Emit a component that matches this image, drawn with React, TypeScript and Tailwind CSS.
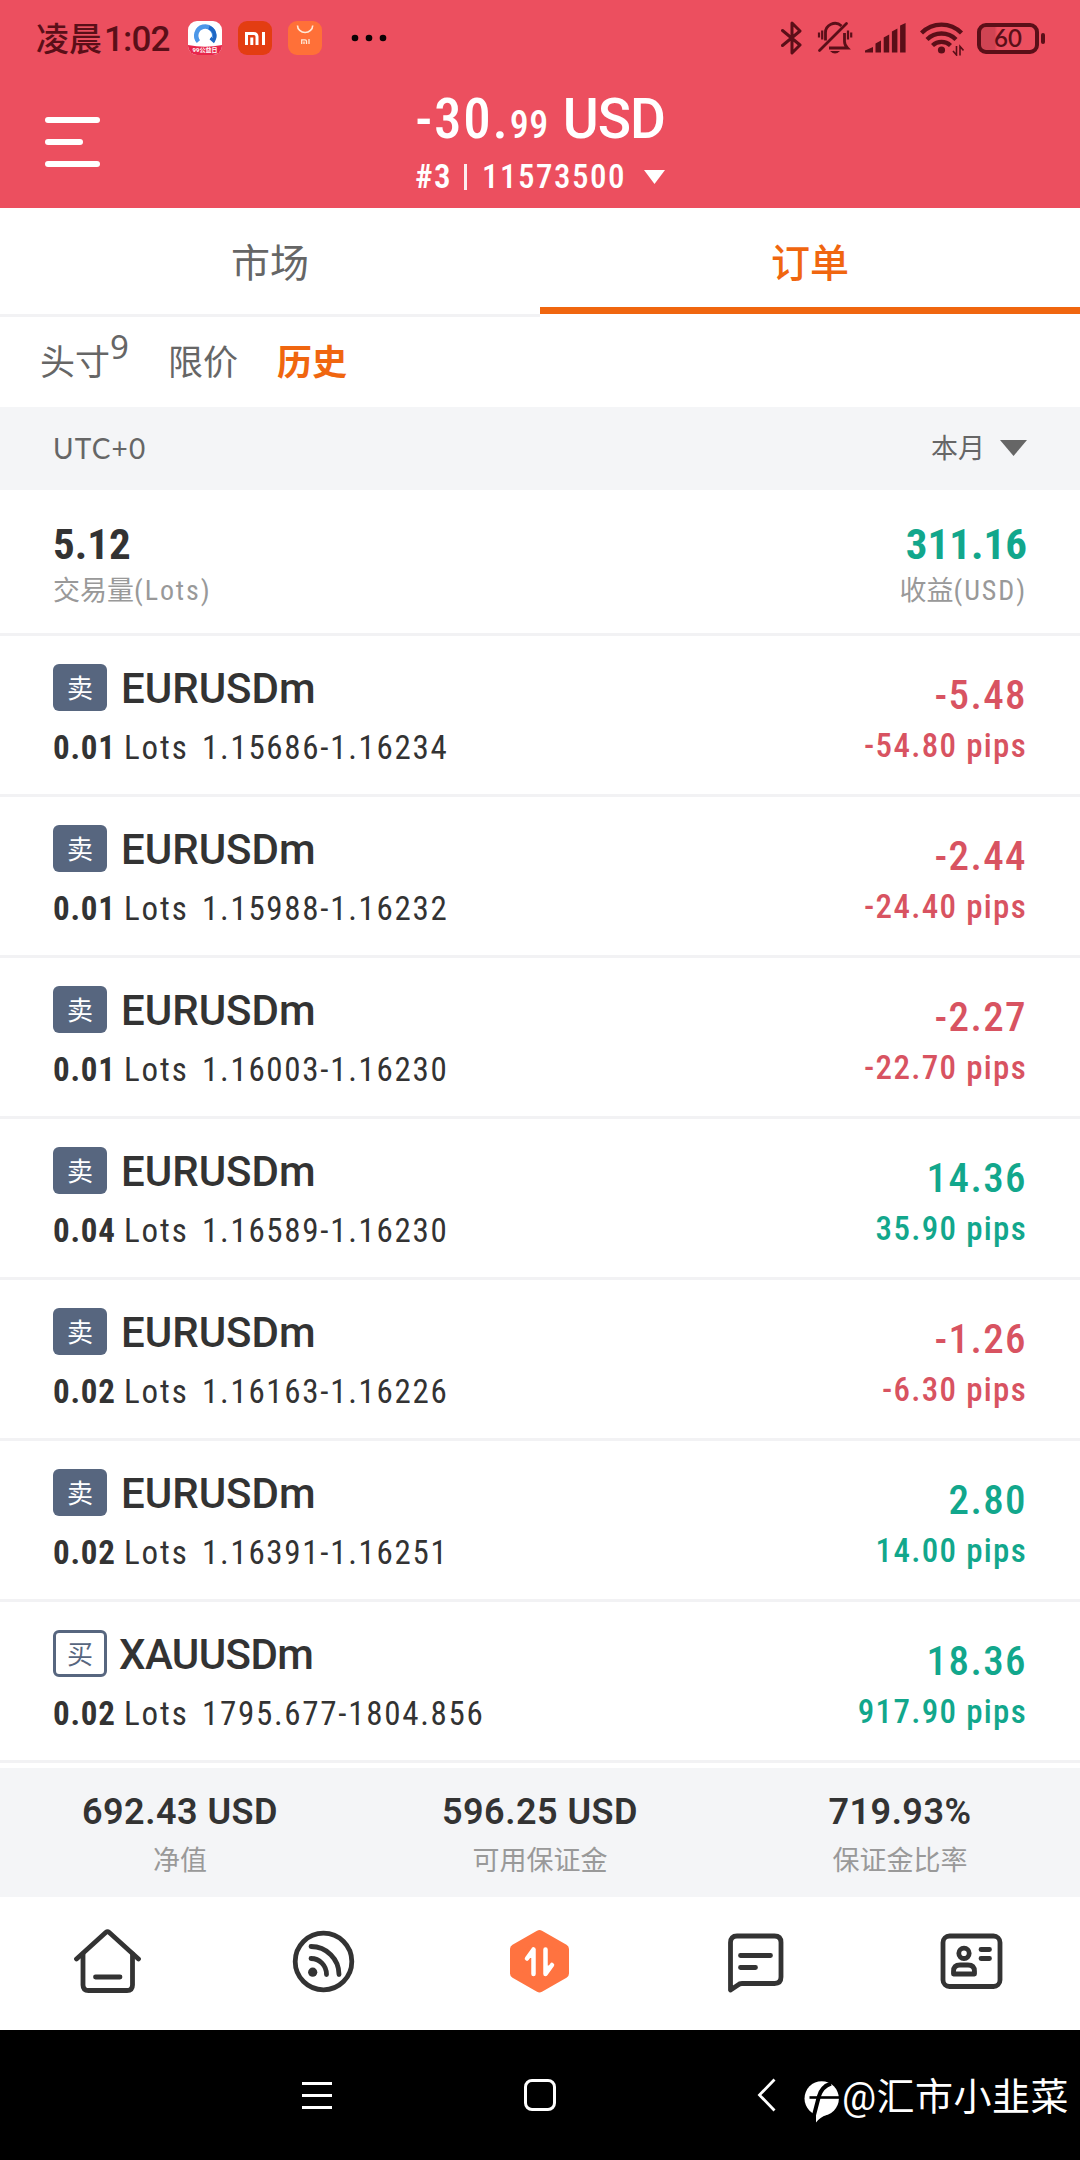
import type { ReactNode } from 'react'

interface Order {
  side: 'sell' | 'buy'
  symbol: string
  lots: string
  range: string
  profit: string
  pips: string
}

const orders: Order[] = [
  { side: 'sell', symbol: 'EURUSDm', lots: '0.01', range: '1.15686-1.16234', profit: '-5.48', pips: '-54.80' },
  { side: 'sell', symbol: 'EURUSDm', lots: '0.01', range: '1.15988-1.16232', profit: '-2.44', pips: '-24.40' },
  { side: 'sell', symbol: 'EURUSDm', lots: '0.01', range: '1.16003-1.16230', profit: '-2.27', pips: '-22.70' },
  { side: 'sell', symbol: 'EURUSDm', lots: '0.04', range: '1.16589-1.16230', profit: '14.36', pips: '35.90' },
  { side: 'sell', symbol: 'EURUSDm', lots: '0.02', range: '1.16163-1.16226', profit: '-1.26', pips: '-6.30' },
  { side: 'sell', symbol: 'EURUSDm', lots: '0.02', range: '1.16391-1.16251', profit: '2.80', pips: '14.00' },
  { side: 'buy', symbol: 'XAUUSDm', lots: '0.02', range: '1795.677-1804.856', profit: '18.36', pips: '917.90' },
]

const account = [
  { value: '692.43 USD', label: '净值' },
  { value: '596.25 USD', label: '可用保证金' },
  { value: '719.93%', label: '保证金比率' },
]

function StatusBar() {
  return (
    <div className="flex h-[76px] items-center pl-9 text-[#5a0f18]">
      <span className="w-[135px] whitespace-nowrap pt-[3px] text-[33px] font-medium leading-10">
        凌晨<span className="ml-[2px] text-[35px] tracking-[-0.8px]">1:02</span>
      </span>

      <div className="relative ml-[17px] size-[34px] overflow-hidden rounded-[9px] bg-white">
        <svg className="size-full" viewBox="0 0 34 34" fill="none">
          <path d="M10.500 20.500a9 9 0 1 1 15.500-4" stroke="#4c97e8" strokeWidth="4.5" />
          <path d="M21 6.500a9 9 0 0 1 4.500 13l-3-2.500" stroke="#1f67c4" strokeWidth="3.500" />
          <circle cx="16.500" cy="16" r="5.500" fill="#fff" />
          <path d="M0 24q17 3.500 34 0v10H0z" fill="#e8274b" />
        </svg>
        <span className="absolute inset-x-0 bottom-px text-center text-[6px] font-bold leading-[8px] text-white">
          99公益日
        </span>
      </div>
      <div className="ml-4 size-[34px] overflow-hidden rounded-[9px] bg-[#e33d12]">
        <svg className="size-full" viewBox="0 0 34 34" fill="none" stroke="#fff" strokeWidth="3">
          <path d="M8.5 24V12.5H16a3 3 0 0 1 3 3V24M13.8 16.5V24M25.5 11V24" />
        </svg>
      </div>
      <div className="ml-4 size-[34px] overflow-hidden rounded-[9px] bg-[#ff7038]">
        <svg className="size-full" viewBox="0 0 34 34" fill="none" stroke="#ffe9d8" strokeWidth="1.6">
          <path d="M9.5 4.5a7.6 7 0 0 0 15.200 0" />
          <path d="M13.7 23V18.8H17a1.5 1.5 0 0 1 1.5 1.5V23M16 20.500V23M21 18V23" strokeWidth="1.3" />
        </svg>
      </div>
      <svg className="ml-[29px] h-2 w-9" viewBox="0 0 36 8" fill="#0c0204">
        <circle cx="4" cy="4" r="3.3" />
        <circle cx="18" cy="4" r="3.3" />
        <circle cx="32" cy="4" r="3.3" />
      </svg>

      <div className="ml-auto mr-[35px] flex items-center">
        <svg
          className="h-9 w-[22px]"
          viewBox="0 0 22 36"
          fill="none"
          stroke="currentColor"
          strokeWidth="3"
          strokeLinejoin="round"
          strokeLinecap="round"
        >
          <path d="M1.5 10.5 19 25 11 33V3l8 8L1.5 25.5" />
        </svg>
        <svg className="ml-[14px] h-9 w-9" viewBox="0 0 36 36" fill="none" stroke="currentColor" strokeWidth="2.800">
          <path d="M27.500 13v8.500q0 3.500 3 6.500H12M8.500 20.500V13.500a9.500 9.500 0 0 1 16-7.500" />
          <path d="M2.500 30.500 29.500 3.500" strokeLinecap="round" />
          <path d="M13 31h10q-5 5-10 0z" fill="currentColor" stroke="none" />
          <path d="M2 12.500v5M5.200 10.500v9M31 10.500v9M34.200 12.500v5" strokeWidth="2.200" />
        </svg>
        <svg className="ml-3 h-[30px] w-[41px]" viewBox="0 0 41 30" fill="currentColor">
          <path d="M0 29.500V27.500L8 24V29.500zM10.500 29.500V20.500l5.500-3V29.500zM18.700 29.500V14.500l5.500-3V29.500zM26.900 29.500V8.500l5.500-3V29.500zM35.100 29.500V2.500l5.500-2.500V29.500z" />
        </svg>
        <svg className="ml-[14px] h-9 w-11" viewBox="0 0 44 36" fill="none" stroke="currentColor" strokeWidth="4.300">
          <path d="M1.500 13a28 28 0 0 1 40 0M7 19.500a20.500 20.500 0 0 1 29 0M12.500 25.500a13 13 0 0 1 18 0" />
          <circle cx="21.500" cy="30" r="3.600" fill="currentColor" stroke="none" />
          <path d="M36.500 26v9l-3.500-4M40 35.500v-9l3.500 4" strokeWidth="1.600" />
        </svg>
        <div className="ml-[13px] flex h-[31px] w-[62px] items-center justify-center rounded-[9px] border-4 border-current bg-linear-to-r from-[#d04453] from-25% to-transparent to-30% font-[Lato] text-[24px] font-semibold leading-6">
          60
        </div>
        <div className="ml-[2px] h-[11px] w-1 rounded-sm bg-current" />
      </div>
    </div>
  )
}

function Header() {
  return (
    <header className="h-[208px] bg-[#ec4f5f]">
      <StatusBar />
      <div className="relative flex h-[132px] flex-col items-center text-white">
        <div className="absolute left-[45px] top-[41px] flex flex-col gap-4">
          <span className="h-1.5 w-[55px] rounded-full bg-white" />
          <span className="h-1.5 w-[38px] rounded-full bg-white" />
          <span className="h-1.5 w-[55px] rounded-full bg-white" />
        </div>
        <div className="mt-[11px] flex h-16 items-baseline whitespace-nowrap text-[55px] font-medium leading-[64px]">
          <span className="font-['Roboto_Condensed'] tracking-[1.800px]">-30.</span>
          <span className="font-['Roboto_Condensed'] text-[38px] tracking-[0.500px]">99</span>
          <span className="ml-[14px] tracking-[-1px]">USD</span>
        </div>
        <div className="mt-[6px] flex h-10 items-center whitespace-nowrap font-['Roboto_Condensed'] text-[33px] font-medium leading-10 tracking-[1.500px]">
          <span className="font-semibold">#3</span>
          <span className="ml-[12px] h-[26px] w-[3px] bg-white/90" />
          <span className="ml-[15px]">11573500</span>
          <svg className="ml-[18px] h-[14px] w-[21px]" viewBox="0 0 21 14" fill="currentColor">
            <path d="M0 0h21L10.500 14z" />
          </svg>
        </div>
      </div>
    </header>
  )
}

function Tabs() {
  return (
    <div className="flex h-[109px] text-[39px] leading-[112px]">
      <div className="flex-1 border-b-[3px] border-[#f2f2f4] text-center text-[#666]">市场</div>
      <div className="flex h-[109px] flex-1 flex-col text-center font-medium text-[#f0660f]">
        <span className="h-[99px]">订单</span>
        <span className="h-[7px] bg-[#f0660f]" />
      </div>
    </div>
  )
}

function SubTabs() {
  return (
    <div className="flex h-[90px] items-center pl-[40px] pt-[3px] text-[35px] leading-[90px] text-[#666]">
      <span>头寸</span>
      <span className="mb-[34px] font-['Noto_Sans'] text-[33px] leading-9">9</span>
      <span className="ml-[39px]">限价</span>
      <span className="ml-[39px] font-bold text-[#f0660f]">历史</span>
    </div>
  )
}

function FilterBar() {
  return (
    <div className="flex h-[83px] items-center justify-between bg-[#f4f5f7] px-[53px] pb-[2px] text-[#666]">
      <span className="font-[Lato] text-[28px] tracking-[1.200px]">UTC+0</span>
      <span className="flex items-center text-[27px]">
        <span className="pt-[3px]">本月</span>
        <svg className="ml-[15px] h-4 w-[27px]" viewBox="0 0 27 16" fill="currentColor">
          <path d="M0 0h27L13.500 16z" />
        </svg>
      </span>
    </div>
  )
}

function Summary() {
  return (
    <div className="flex h-[146px] justify-between border-b-[3px] border-[#f2f2f4] px-[53px] pt-7">
      <div className="flex flex-col">
        <span className="font-['Roboto_Condensed'] text-[43px] font-bold leading-[52px]">5.12</span>
        <span className="mt-px font-['Roboto_Condensed','Noto_Sans_CJK_SC'] text-[27px] leading-10 text-[#999]">
          交易量<span className="text-[28px] tracking-[1.900px]">(Lots)</span>
        </span>
      </div>
      <div className="flex flex-col items-end">
        <span className="font-['Roboto_Condensed'] text-[43px] font-bold leading-[52px] text-[#12a78c]">311.16</span>
        <span className="mt-px font-['Roboto_Condensed','Noto_Sans_CJK_SC'] text-[27px] leading-10 text-[#999]">
          收益<span className="text-[28px] tracking-[1.900px]">(USD)</span>
        </span>
      </div>
    </div>
  )
}

function OrderRow({ order }: { order: Order }) {
  const isSell = order.side === 'sell'
  const tone = order.profit.startsWith('-') ? 'text-[#d85361]' : 'text-[#12a78c]'

  return (
    <div className="flex h-[161px] justify-between border-b-[3px] border-[#f2f2f4] px-[53px]">
      <div className="flex flex-col pt-7">
        <div className="flex h-[47px] items-center">
          <span
            className={`flex h-[47px] w-[54px] items-center justify-center rounded-md pt-[2px] text-[26px] leading-none ${
              isSell ? 'bg-[#57667f] text-white' : 'border-[3px] border-[#57667f] text-[#57667f]'
            }`}
          >
            {isSell ? '卖' : '买'}
          </span>
          <span
            className={`pt-[2px] text-[42px] font-medium leading-[47px] ${isSell ? 'ml-[14px]' : 'ml-3 tracking-[-0.6px]'}`}
          >
            {order.symbol}
          </span>
        </div>
        <div className="mt-[17px] flex whitespace-nowrap font-['Roboto_Condensed'] text-[33px] leading-10">
          <span className="w-[71px] font-bold tracking-[0.800px]">{order.lots}</span>
          <span className="w-[78px] tracking-[1.900px]">Lots</span>
          <span className="tracking-[1.700px]">{order.range}</span>
        </div>
      </div>
      <div className={`flex flex-col items-end whitespace-nowrap pt-[35px] font-['Roboto_Condensed'] ${tone}`}>
        <span className="text-[41px] font-medium leading-[48px] tracking-[1.400px]">{order.profit}</span>
        <span className="mt-[7px] text-[33px] font-medium leading-10 tracking-[1.300px]">{order.pips} pips</span>
      </div>
    </div>
  )
}

function NavIcon({ children }: { children: ReactNode }) {
  return (
    <svg
      className="size-[72px]"
      viewBox="0 0 72 72"
      fill="none"
      stroke="#333"
      strokeWidth="4.800"
      strokeLinecap="round"
      strokeLinejoin="round"
    >
      {children}
    </svg>
  )
}

function BottomNav() {
  return (
    <nav className="grid h-[133px] grid-cols-5 place-items-center bg-white">
      <NavIcon>
        <path d="M4.500 31 34 4.300q1.500-1.300 3 0L66.500 31" />
        <path d="M11 26V57q0 5.500 5.500 5.500H55q5.500 0 5.500-5.500V26M23.500 49H48" />
      </NavIcon>
      <NavIcon>
        <circle cx="35.500" cy="33.500" r="28.300" />
        <circle cx="24.700" cy="44.200" r="4.600" fill="#333" stroke="none" />
        <path d="M23 30.500A15.500 16 0 0 1 38.500 46.500M23 18.500A28 28 0 0 1 51 46.500" />
      </NavIcon>
      <NavIcon>
        <path d="M35.500 7 60 21V45.500L35.500 59.500 11 45.500V21z" fill="#ff7340" stroke="#ff7340" strokeWidth="10" />
        <path d="M29.500 21.500V46M29.500 21.500 23 30.500M41.500 21.500V46L48 37" stroke="#fff" strokeWidth="4.500" />
        <path d="M29.500 21.500 24 30H29.500zM41.500 46 47 37.500H41.500z" fill="#fff" stroke="none" />
      </NavIcon>
      <NavIcon>
        <path d="M10.500 62V14.500q0-6.500 6.500-6.500H54.500q6.500 0 6.500 6.500V49q0 6.500-6.500 6.500H22q-2.500 0-4 1.500zM20.500 27.500H50.500M20.500 39.500H35.500" />
      </NavIcon>
      <NavIcon>
        <rect x="7" y="8" width="57" height="50.5" rx="6.500" />
        <circle cx="28" cy="25.300" r="5.200" />
        <path d="M17.500 46V43.500q0-6.500 6.500-6.500h8q6.500 0 6.500 6.500V46zM45 21.500H53.500M45 30.500H53.500" />
      </NavIcon>
    </nav>
  )
}

function SystemBar() {
  return (
    <div className="flex h-[130px] items-center bg-black pl-[302px] text-white">
      <div className="flex w-[30px] flex-col gap-[9px]">
        <span className="h-[3px] bg-white" />
        <span className="h-[3px] bg-white" />
        <span className="h-[3px] bg-white" />
      </div>
      <div className="ml-[192px] size-8 rounded-[8px] border-3 border-white" />
      <svg className="ml-[201px] h-[34px] w-5" viewBox="0 0 20 34" fill="none" stroke="currentColor" strokeWidth="2.800">
        <path d="M17.500 1.500 2.500 17 17.500 32.500" />
      </svg>
      <svg className="ml-[27px] mt-[13px] h-[42px] w-9" viewBox="0 0 36 42">
        <path d="M12 28V41.500Q16 36 24 33z" fill="#fff" />
        <circle cx="17.700" cy="17.500" r="17.200" fill="#fff" />
        <path d="M27 2.500Q18 5.500 15 15L9.500 36" fill="none" stroke="#000" strokeWidth="4" />
        <path d="M5.500 16.500H36" stroke="#000" strokeWidth="2.600" />
      </svg>
      <span className="ml-[2px] mt-1 whitespace-nowrap text-[38px] leading-[48px] tracking-[0.500px]">@汇市小韭菜</span>
    </div>
  )
}

export default function App() {
  return (
    <div className="h-[2160px] w-[1080px] overflow-hidden bg-white font-[Roboto,'Noto_Sans_CJK_SC',sans-serif] text-[#333]">
      <Header />
      <Tabs />
      <SubTabs />
      <FilterBar />
      <Summary />
      {orders.map((order) => (
        <OrderRow key={order.range} order={order} />
      ))}
      <div className="mt-[5px] grid h-[129px] grid-cols-3 bg-[#f4f5f7] text-center">
        {account.map((item) => (
          <div key={item.label} className="flex flex-col pt-[22px]">
            <span className="text-[36px] font-semibold leading-[44px] tracking-[0.500px]">{item.value}</span>
            <span className="mt-[9px] text-[27px] leading-9 text-[#999]">{item.label}</span>
          </div>
        ))}
      </div>
      <BottomNav />
      <SystemBar />
    </div>
  )
}
